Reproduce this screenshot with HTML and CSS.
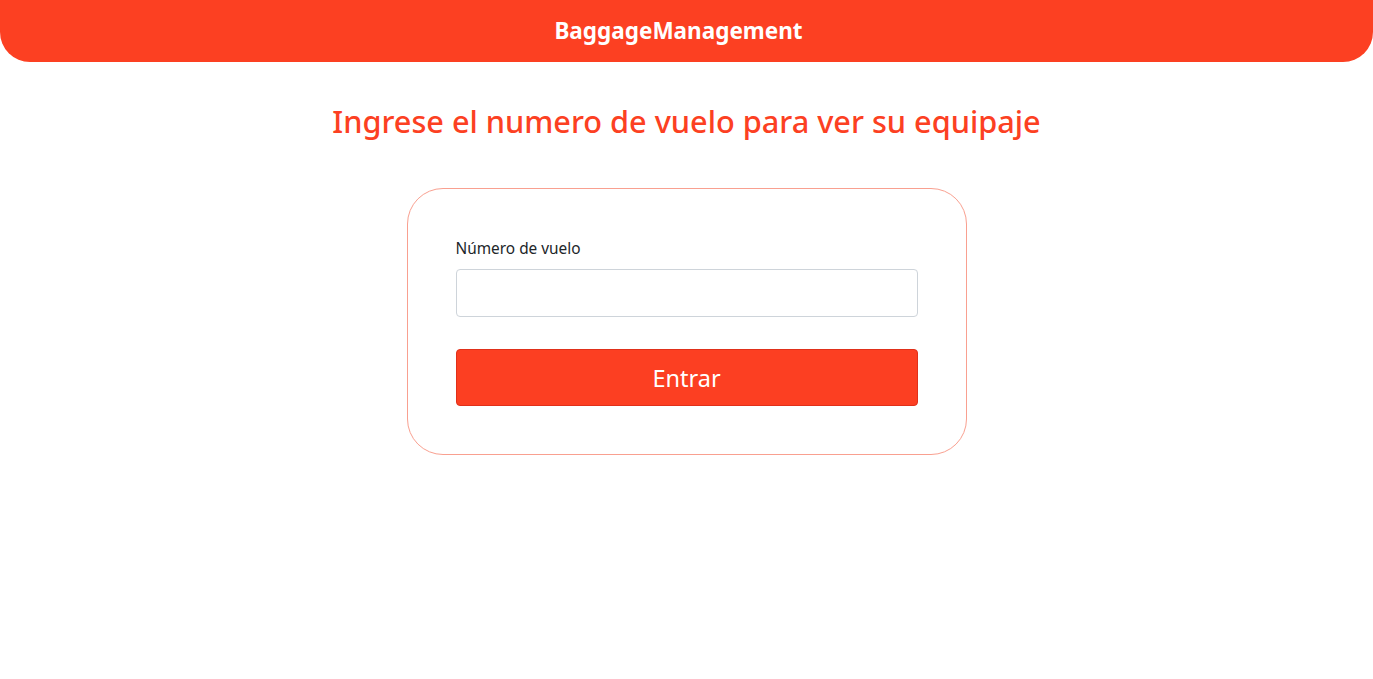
FILE: index.html
```html
<!DOCTYPE html>
<html lang="es">
<head>
<meta charset="utf-8">
<title>BaggageManagement</title>
<link rel="stylesheet" href="styles.css">
</head>
<body>
<header class="topbar">
  <span class="brand">BaggageManagement</span>
</header>
<main class="main">
  <h1 class="title">Ingrese el numero de vuelo para ver su equipaje</h1>
  <form class="card">
    <label class="label" for="vuelo">Número de vuelo</label>
    <input class="input" id="vuelo" type="text">
    <button class="btn" type="button">Entrar</button>
  </form>
</main>
</body>
</html>
```

FILE: styles.css
```css
* { box-sizing: border-box; }
html, body { margin: 0; padding: 0; background: #fff; }
body { font-family: "Noto Sans", "Open Sans", sans-serif; color: #212529; }
.topbar {
  height: 62px;
  background: #fc4022;
  border-radius: 0 0 30px 30px;
  display: flex;
  align-items: center;
  justify-content: center;
  padding: 0 16px 2px 0;
}
.brand { color: #fff; font-weight: 700; font-size: 22.5px; }
.main { display: flex; flex-direction: column; align-items: center; }
.title {
  margin: 40px 0 0;
  color: #fc4022;
  font-weight: 500;
  font-size: 30.7px;
  line-height: 38px;
}
.card {
  margin-top: 48px;
  width: 560px;
  border: 1px solid #f9a090;
  border-radius: 36px;
  padding: 50px 48px 48px;
  display: flex;
  flex-direction: column;
}
.label { font-size: 15.4px; line-height: 20px; margin-bottom: 10px; }
.input {
  height: 48px;
  border: 1px solid #ced4da;
  border-radius: 4px;
  font-size: 16px;
  padding: 6px 12px;
}
.btn {
  margin-top: 32px;
  height: 57px;
  background: #fc3f22;
  border: 1px solid #e0301a;
  border-radius: 4px;
  color: #fff;
  font-family: inherit;
  font-size: 23.5px;
}
```
